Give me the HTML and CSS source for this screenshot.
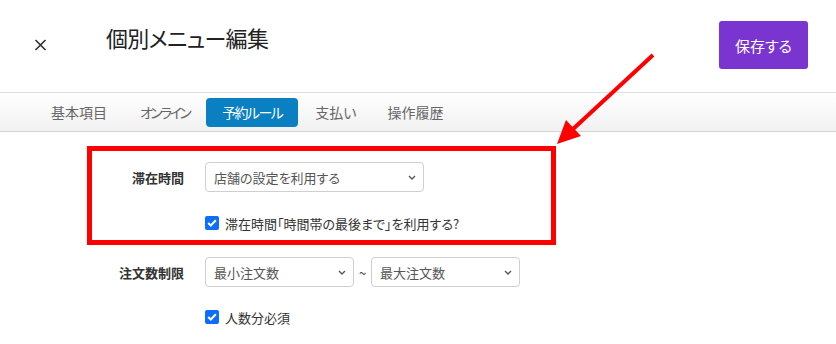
FILE: index.html
```html
<!DOCTYPE html>
<html lang="ja">
<head>
<meta charset="utf-8">
<title>個別メニュー編集</title>
<link rel="stylesheet" href="styles.css">
</head>
<body>
<div class="page">
  <header class="header">
    <span class="close">
      <svg width="13" height="12" viewBox="0 0 13 12"><path d="M1.5 1 L11.5 11 M11.5 1 L1.5 11" stroke="#333" stroke-width="1.7" fill="none"/></svg>
    </span>
    <h1 class="title">個別メニュー編集</h1>
    <button class="save">保存する</button>
  </header>
  <nav class="tabs">
    <span class="tab">基本項目</span>
    <span class="tab kana">オンライン</span>
    <span class="tab active kana-mid">予約ルール</span>
    <span class="tab short">支払い</span>
    <span class="tab">操作履歴</span>
  </nav>
  <main class="form">
    <section class="highlight">
      <div class="row">
        <label class="label">滞在時間</label>
        <div class="select wide"><span>店舗の設定を利用する</span>
          <svg class="chev" width="8" height="5" viewBox="0 0 8 5"><path d="M1 1 L4 4 L7 1" stroke="#555" stroke-width="1.4" fill="none"/></svg>
        </div>
      </div>
      <div class="check-row first">
        <span class="box"><svg width="10" height="8" viewBox="0 0 10 8"><path d="M1.2 4 L3.8 6.5 L8.8 1.3" stroke="#fff" stroke-width="2" fill="none"/></svg></span>
        <span class="check-label">滞在時間「時間帯の最後まで」を利用する?</span>
      </div>
    </section>
    <section class="plain">
      <div class="row">
        <label class="label">注文数制限</label>
        <div class="select half"><span>最小注文数</span>
          <svg class="chev" width="8" height="5" viewBox="0 0 8 5"><path d="M1 1 L4 4 L7 1" stroke="#555" stroke-width="1.4" fill="none"/></svg>
        </div>
        <span class="tilde">~</span>
        <div class="select half"><span>最大注文数</span>
          <svg class="chev" width="8" height="5" viewBox="0 0 8 5"><path d="M1 1 L4 4 L7 1" stroke="#555" stroke-width="1.4" fill="none"/></svg>
        </div>
      </div>
      <div class="check-row second">
        <span class="box"><svg width="10" height="8" viewBox="0 0 10 8"><path d="M1.2 4 L3.8 6.5 L8.8 1.3" stroke="#fff" stroke-width="2" fill="none"/></svg></span>
        <span class="check-label">人数分必須</span>
      </div>
    </section>
  </main>
  <svg class="arrow" width="836" height="344" viewBox="0 0 836 344">
    <line x1="653" y1="55" x2="572" y2="130" stroke="#f00" stroke-width="4"/>
    <polygon points="557,144 566,120 581,136" fill="#f00"/>
  </svg>
</div>
</body>
</html>
```

FILE: styles.css
```css
* { box-sizing: border-box; }
html, body { margin: 0; padding: 0; background: #fff; }
body {
  font-family: "Noto Sans CJK JP", "Noto Sans", sans-serif;
  font-feature-settings: "palt" 1;
  color: #333;
  width: 836px;
  height: 344px;
  overflow: hidden;
}
.page { position: relative; width: 836px; height: 344px; }

.header {
  display: flex;
  align-items: flex-start;
  height: 92px;
}
.close {
  display: flex;
  margin: 39px 0 0 34px;
  width: 13px;
  height: 12px;
}
.title {
  margin: 21px 0 0 59px;
  font-size: 22px;
  letter-spacing: -0.7px;
  line-height: 32px;
  font-weight: 400;
  color: #222;
}
.save {
  margin: 21px 28px 0 auto;
  width: 89px;
  height: 48px;
  border: 0;
  border-radius: 3px;
  background: #7a35d0;
  color: #fff;
  font-family: inherit;
  font-feature-settings: "palt" 1;
  font-size: 15px;
  padding: 0;
}

.tabs {
  display: flex;
  align-items: flex-start;
  height: 40px;
  padding: 5px 0 0 35px;
  border-top: 1px solid #dedede;
  border-bottom: 1px solid #d4d4d4;
  background: linear-gradient(#ffffff, #f1f1f1);
}
.tab {
  padding: 0 16px;
  height: 29px;
  line-height: 29px;
  font-size: 14px;
  color: #666;
  border-radius: 4px;
  margin-right: 1px;
}
.tab.kana { letter-spacing: -2.6px; }
.tab.kana-mid { letter-spacing: -1.6px; }
.tab.short { padding-right: 14px; }
.tab.active {
  background: #0a7fc2;
  color: #fff;
}

.form { display: flex; flex-direction: column; }
.highlight {
  margin: 14px 0 0 87px;
  width: 469px;
  height: 99px;
  border: 5px solid #f00;
  padding: 11px 0 0 0;
}
.plain {
  padding: 12px 0 0 92px;
}
.row {
  display: flex;
  align-items: center;
}
.label {
  width: 92px;
  text-align: right;
  margin-right: 21px;
  font-size: 13px;
  font-weight: 700;
  color: #333;
}
.select {
  display: flex;
  align-items: center;
  justify-content: space-between;
  height: 30px;
  border: 1px solid #cfcfcf;
  border-radius: 4px;
  padding: 0 7px 0 8px;
  font-size: 13px;
  color: #555;
  background: #fff;
}
.select.wide { width: 219px; }
.select.half { width: 149px; height: 30px; }
.chev { display: block; }
.tilde {
  width: 17px;
  text-align: center;
  font-size: 13px;
  color: #444;
}
.check-row {
  display: flex;
  align-items: center;
  padding-left: 113px;
  height: 20px;
}
.check-row.first { margin-top: 21px; }
.check-row.second { margin-top: 20px; }
.box {
  display: flex;
  align-items: center;
  justify-content: center;
  width: 14px;
  height: 14px;
  border-radius: 2px;
  background: #0d6efd;
  margin-right: 6px;
}
.check-label {
  font-size: 13px;
  color: #333;
}
.arrow {
  position: absolute;
  left: 0;
  top: 0;
  pointer-events: none;
}
```
